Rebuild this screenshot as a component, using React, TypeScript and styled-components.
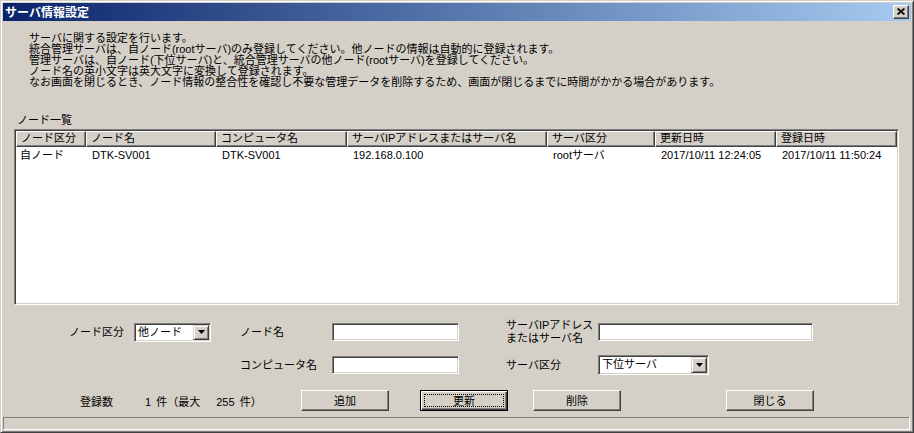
import React from "react";
import styled, { createGlobalStyle } from "styled-components";

// サーバ情報設定ダイアログ
const columns = [
  { key: "kind", label: "ノード区分", width: 70 },
  { key: "node", label: "ノード名", width: 130 },
  { key: "computer", label: "コンピュータ名", width: 131 },
  { key: "address", label: "サーバIPアドレスまたはサーバ名", width: 200 },
  { key: "serverKind", label: "サーバ区分", width: 108 },
  { key: "updated", label: "更新日時", width: 121 },
  { key: "created", label: "登録日時", width: 121 },
];

const nodes = [
  {
    kind: "自ノード",
    node: "DTK-SV001",
    computer: "DTK-SV001",
    address: "192.168.0.100",
    serverKind: "rootサーバ",
    updated: "2017/10/11 12:24:05",
    created: "2017/10/11 11:50:24",
  },
];

const notes = [
  "サーバに関する設定を行います。",
  "統合管理サーバは、自ノード(rootサーバ)のみ登録してください。他ノードの情報は自動的に登録されます。",
  "管理サーバは、自ノード(下位サーバ)と、統合管理サーバの他ノード(rootサーバ)を登録してください。",
  "ノード名の英小文字は英大文字に変換して登録されます。",
  "なお画面を閉じるとき、ノード情報の整合性を確認し不要な管理データを削除するため、画面が閉じるまでに時間がかかる場合があります。",
];

const gridColumns = columns.map((c) => `${c.width}px`).join(" ");

const ArrowDown = () => (
  <svg width="7" height="4" viewBox="0 0 7 4">
    <polygon points="0,0 7,0 3.5,4" fill="#000" />
  </svg>
);

const CloseGlyph = () => (
  <svg width="8" height="7" viewBox="0 0 8 7">
    <path d="M0.6 0.5 L7.4 6.5 M7.4 0.5 L0.6 6.5" stroke="#000" strokeWidth="1.7" fill="none" />
  </svg>
);

const App = () => {
  return (
    <>
      <GlobalStyle />
      <Window>
        <TitleBar>
          <Title>サーバ情報設定</Title>
          <CloseButton>
            <CloseGlyph />
          </CloseButton>
        </TitleBar>

        <Body>
          <Notes>
            {notes.map((line) => (
              <div key={line}>{line}</div>
            ))}
          </Notes>

          <SectionLabel>ノード一覧</SectionLabel>
          <ListView>
            <HeaderRow>
              {columns.map((c) => (
                <HeaderCell key={c.key}>{c.label}</HeaderCell>
              ))}
            </HeaderRow>
            {nodes.map((n) => (
              <DataRow key={n.node}>
                {columns.map((c) => (
                  <DataCell key={c.key}>{(n as any)[c.key]}</DataCell>
                ))}
              </DataRow>
            ))}
          </ListView>

          <Form>
            <FormLabel $col={1} $row={1} $right>
              ノード区分
            </FormLabel>
            <Field $col={2} $row={1}>
              <Combo $width={77} $height={19}>
                <ComboValue>他ノード</ComboValue>
                <DropButton>
                  <ArrowDown />
                </DropButton>
              </Combo>
            </Field>

            <FormLabel $col={3} $row={1}>ノード名</FormLabel>
            <Field $col={4} $row={1}>
              <TextBox $width={127} />
            </Field>

            <FormLabel $col={5} $row={1}>
              サーバIPアドレス
              <br />
              またはサーバ名
            </FormLabel>
            <Field $col={6} $row={1}>
              <TextBox $width={215} />
            </Field>

            <FormLabel $col={3} $row={2}>コンピュータ名</FormLabel>
            <Field $col={4} $row={2}>
              <TextBox $width={127} />
            </Field>

            <FormLabel $col={5} $row={2}>サーバ区分</FormLabel>
            <Field $col={6} $row={2}>
              <Combo $width={111} $height={20}>
                <ComboValue>下位サーバ</ComboValue>
                <DropButton>
                  <ArrowDown />
                </DropButton>
              </Combo>
            </Field>
          </Form>

          <ActionRow>
            <span>登録数</span>
            <Count>1 件（最大　 255 件）</Count>
            <PushButton>
              <ButtonFace>追加</ButtonFace>
            </PushButton>
            <PushButton $default>
              <ButtonFace $focused>更新</ButtonFace>
            </PushButton>
            <PushButton>
              <ButtonFace>削除</ButtonFace>
            </PushButton>
            <PushButton>
              <ButtonFace>閉じる</ButtonFace>
            </PushButton>
          </ActionRow>

          <StatusBar />
        </Body>
      </Window>
    </>
  );
};

export default App;

const GlobalStyle = createGlobalStyle`
  html, body {
    margin: 0;
    padding: 0;
    background: #d4d0c8;
  }
  body {
    font-family: "Liberation Sans", "Noto Sans CJK JP", sans-serif;
    font-size: 11px;
    color: #000;
  }
  * {
    box-sizing: border-box;
  }
`;

const Window = styled.div`
  width: 914px;
  height: 433px;
  display: flex;
  flex-direction: column;
  background: #d4d0c8;
  border: 1px solid;
  border-color: #d4d0c8 #404040 #404040 #d4d0c8;
  box-shadow: inset 1px 1px #fff, inset -1px -1px #808080;
  padding: 2px;
`;

const TitleBar = styled.div`
  height: 18px;
  flex-shrink: 0;
  display: flex;
  align-items: center;
  justify-content: space-between;
  padding: 0 2px 0 2px;
  background: linear-gradient(to right, #0a246a, #a6caf0);
`;

const Title = styled.span`
  color: #fff;
  font-family: "Noto Sans CJK JP", sans-serif;
  font-weight: bold;
  font-size: 12px;
  line-height: 18px;
`;

const CloseButton = styled.div`
  width: 16px;
  height: 14px;
  display: flex;
  align-items: center;
  justify-content: center;
  background: #d4d0c8;
  border: 1px solid;
  border-color: #fff #404040 #404040 #fff;
  box-shadow: inset -1px -1px #808080;
  padding-bottom: 1px;
`;

const Body = styled.div`
  flex: 1;
  display: flex;
  flex-direction: column;
`;

const Notes = styled.div`
  margin: 12px 0 0 26px;
  line-height: 11px;
  white-space: nowrap;
`;

const SectionLabel = styled.div`
  margin: 27px 0 0 14px;
  line-height: 11px;
`;

const ListView = styled.div`
  margin: 3px 0 0 11px;
  width: 885px;
  height: 176px;
  background: #fff;
  border: 1px solid;
  border-color: #808080 #fff #fff #808080;
  box-shadow: inset 1px 1px #404040, inset -1px -1px #d4d0c8;
  padding: 1px;
`;

const HeaderRow = styled.div`
  display: grid;
  grid-template-columns: ${gridColumns};
  height: 16px;
`;

const HeaderCell = styled.div`
  background: #d4d0c8;
  border: 1px solid;
  border-color: #fff #404040 #404040 #fff;
  box-shadow: inset -1px -1px #808080;
  padding-left: 4px;
  line-height: 13px;
  white-space: nowrap;
  overflow: hidden;
`;

const DataRow = styled.div`
  display: grid;
  grid-template-columns: ${gridColumns};
  height: 14px;
  margin-top: 1px;
`;

const DataCell = styled.div`
  padding-left: 6px;
  line-height: 14px;
  white-space: nowrap;
  overflow: hidden;
  &:first-child {
    padding-left: 4px;
  }
`;

const Form = styled.div`
  margin-top: 13px;
  display: grid;
  grid-template-columns: 131px 106px 92px 174px 92px 215px;
  grid-template-rows: 28px 20px;
  row-gap: 9px;
  align-items: center;
`;

const FormLabel = styled.div<{ $col: number; $row: number; $right?: boolean }>`
  grid-column: ${({ $col }) => $col};
  grid-row: ${({ $row }) => $row};
  text-align: ${({ $right }) => ($right ? "right" : "left")};
  padding-right: ${({ $right }) => ($right ? "10px" : "0")};
  line-height: 13px;
  white-space: nowrap;
`;

const Field = styled.div<{ $col: number; $row: number }>`
  grid-column: ${({ $col }) => $col};
  grid-row: ${({ $row }) => $row};
  display: flex;
  align-items: center;
`;

const Sunken = styled.div`
  background: #fff;
  border: 1px solid;
  border-color: #808080 #fff #fff #808080;
  box-shadow: inset 1px 1px #404040, inset -1px -1px #d4d0c8;
`;

const TextBox = styled(Sunken)<{ $width: number }>`
  width: ${({ $width }) => $width}px;
  height: 18px;
`;

const Combo = styled(Sunken)<{ $width: number; $height: number }>`
  width: ${({ $width }) => $width}px;
  height: ${({ $height }) => $height}px;
  display: flex;
  align-items: stretch;
  padding: 1px;
`;

const ComboValue = styled.div`
  flex: 1;
  padding-left: 2px;
  line-height: 15px;
  white-space: nowrap;
`;

const DropButton = styled.div`
  width: 16px;
  display: flex;
  align-items: center;
  justify-content: center;
  background: #d4d0c8;
  border: 1px solid;
  border-color: #d4d0c8 #404040 #404040 #d4d0c8;
  box-shadow: inset 1px 1px #fff, inset -1px -1px #808080;
`;

const ActionRow = styled.div`
  margin-top: 15px;
  padding-left: 77px;
  display: grid;
  grid-template-columns: 65px 156px 119px 113px 193px 88px;
  align-items: center;
  height: 21px;
  white-space: nowrap;
`;

const Count = styled.span`
  word-spacing: 2px;
`;

const PushButton = styled.div<{ $default?: boolean }>`
  width: 88px;
  height: 21px;
  display: flex;
  padding: ${({ $default }) => ($default ? "3px" : "2px")};
  background: #d4d0c8;
  border: 1px solid;
  border-color: ${({ $default }) => ($default ? "#000" : "#fff #404040 #404040 #fff")};
  box-shadow: ${({ $default }) =>
    $default
      ? "inset 1px 1px #fff, inset -1px -1px #404040, inset -2px -2px #808080"
      : "inset -1px -1px #808080"};
`;

const ButtonFace = styled.span<{ $focused?: boolean }>`
  flex: 1;
  display: flex;
  align-items: center;
  justify-content: center;
  border: 1px ${({ $focused }) => ($focused ? "dotted #000" : "solid transparent")};
  line-height: 12px;
`;

const StatusBar = styled.div`
  margin-top: auto;
  margin-right: 1px;
  height: 13px;
  border: 1px solid;
  border-color: #808080 #fff #fff #808080;
`;
